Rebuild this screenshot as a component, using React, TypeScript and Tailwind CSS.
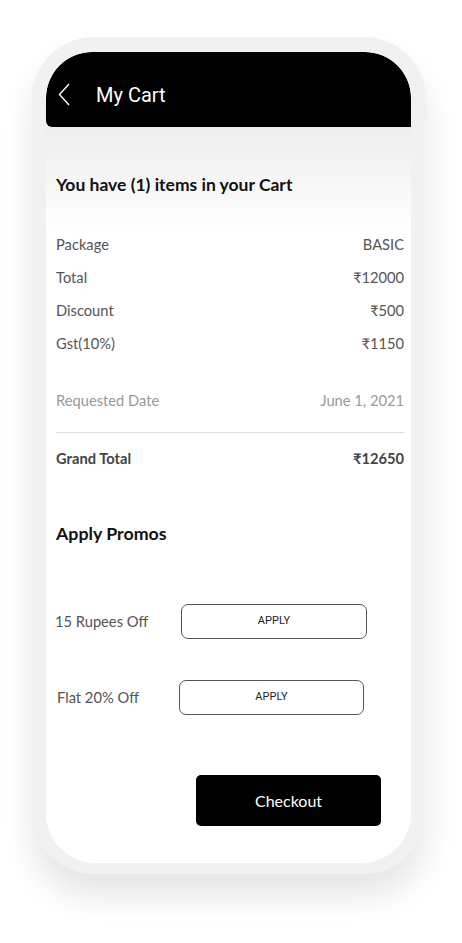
import React from 'react';

const rows = [
    { label: 'Package', value: 'BASIC' },
    { label: 'Total', value: '₹12000' },
    { label: 'Discount', value: '₹500' },
    { label: 'Gst(10%)', value: '₹1150' },
];

function ApplyButton({ className }: { className: string }) {
    return (
        <button
            className={`h-[35px] rounded-[7px] border border-[#555] bg-white text-[11px] text-[#222] font-['Roboto',sans-serif] ${className}`}
        >
            APPLY
        </button>
    );
}

export default function App() {
    return (
        <div className="min-h-[943px] w-[462px] bg-white pt-[37px] pl-[32px] font-['Lato','Liberation_Sans',sans-serif]">
            <div className="w-[394px] h-[837px] rounded-[62px] bg-[#f1f1f1] pt-[15px] pl-[14px] shadow-[0_22px_32px_rgba(0,0,0,0.10)]">
                <div className="w-[365px] h-[811px] rounded-t-[46px] rounded-b-[50px] bg-white overflow-hidden flex flex-col">
                    {/* header */}
                    <div className="h-[75px] shrink-0 bg-black rounded-t-[46px] rounded-bl-[6px] flex items-center pl-[12px]">
                        <svg width="12" height="23" viewBox="0 0 12 23" className="mt-[10px]">
                            <polyline
                                points="11,1 1.5,11.5 11,22"
                                fill="none"
                                stroke="white"
                                strokeWidth="1.4"
                            />
                        </svg>
                        <span className="ml-[26px] mt-[10px] text-white text-[20px] font-['Roboto',sans-serif]">
                            My Cart
                        </span>
                    </div>

                    <div className="flex-1 flex flex-col bg-[linear-gradient(to_bottom,#eeeeee_0px,#ffffff_110px)] pl-[10px] pr-[7px]">
                        <h2 className="mt-[46px] text-[17.5px] leading-[24px] font-bold text-[#111]">
                            You have (1) items in your Cart
                        </h2>

                        <div className="mt-[31px] flex flex-col text-[14.7px] text-[#555]">
                            {rows.map((r) => (
                                <div key={r.label} className="h-[33px] flex items-center justify-between">
                                    <span>{r.label}</span>
                                    <span>{r.value}</span>
                                </div>
                            ))}
                            <div className="mt-[24px] h-[33px] flex items-center justify-between text-[#999]">
                                <span>Requested Date</span>
                                <span>June 1, 2021</span>
                            </div>
                        </div>

                        <div className="mt-[15px] h-px bg-[#ddd]" />

                        <div className="mt-[9px] h-[33px] flex items-center justify-between text-[14.7px] font-bold text-[#444]">
                            <span>Grand Total</span>
                            <span>₹12650</span>
                        </div>

                        <h3 className="mt-[46px] text-[17.8px] leading-[24px] font-bold text-[#111]">
                            Apply Promos
                        </h3>

                        <div className="mt-[59px] flex items-center text-[14.7px] text-[#555] -ml-[1px]">
                            <span className="w-[126px]">15 Rupees Off</span>
                            <ApplyButton className="w-[186px]" />
                        </div>

                        <div className="mt-[41px] flex items-center text-[14.7px] text-[#555] ml-[1px]">
                            <span className="w-[122px]">Flat 20% Off</span>
                            <ApplyButton className="w-[185px]" />
                        </div>

                        <div className="mt-[60px] flex justify-end pr-[23px]">
                            <button className="w-[185px] h-[51px] rounded-[5px] bg-black text-white text-[16px]">
                                Checkout
                            </button>
                        </div>
                    </div>
                </div>
            </div>
        </div>
    );
}
